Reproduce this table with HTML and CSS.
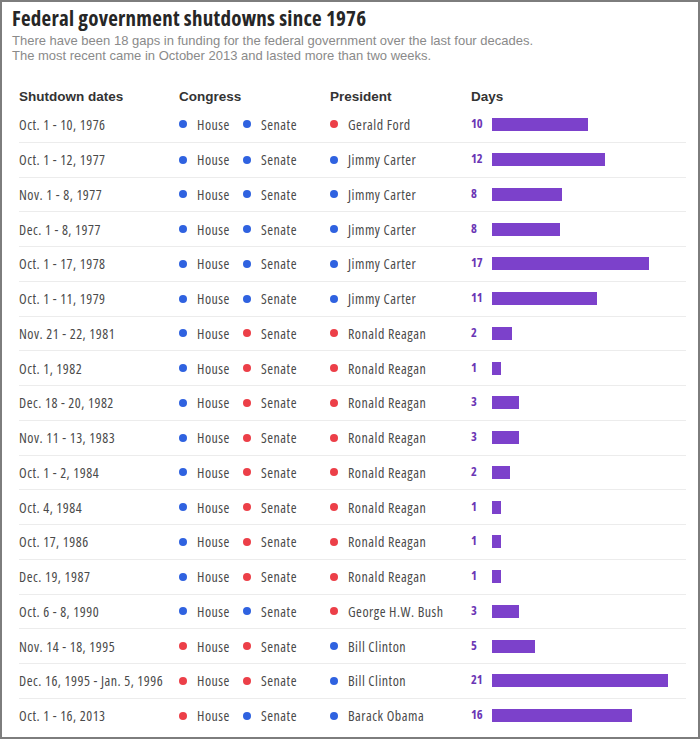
FILE: index.html
```html
<!DOCTYPE html>
<html>
<head>
<meta charset="utf-8">
<link rel="stylesheet" href="styles.css">
</head>
<body>
<div class="frame">
  <h1 class="title">Federal government shutdowns since 1976</h1>
  <p class="sub">There have been 18 gaps in funding for the federal government over the last four decades.<br>The most recent came in October 2013 and lasted more than two weeks.</p>
  <div class="table">
    <div class="head">
      <div>Shutdown dates</div><div>Congress</div><div>President</div><div>Days</div>
    </div>
    <div class="row"><div class="date">Oct. 1 - 10, 1976</div><div class="cong"><span class="it h"><i class="dot d"></i>House</span><span class="it"><i class="dot d"></i>Senate</span></div><div class="pres"><i class="dot r"></i>Gerald Ford</div><div class="days"><b>10</b><span class="bar" style="width:96px"></span></div></div>
    <div class="row"><div class="date">Oct. 1 - 12, 1977</div><div class="cong"><span class="it h"><i class="dot d"></i>House</span><span class="it"><i class="dot d"></i>Senate</span></div><div class="pres"><i class="dot d"></i>Jimmy Carter</div><div class="days"><b>12</b><span class="bar" style="width:113px"></span></div></div>
    <div class="row"><div class="date">Nov. 1 - 8, 1977</div><div class="cong"><span class="it h"><i class="dot d"></i>House</span><span class="it"><i class="dot d"></i>Senate</span></div><div class="pres"><i class="dot d"></i>Jimmy Carter</div><div class="days"><b>8</b><span class="bar" style="width:70px"></span></div></div>
    <div class="row"><div class="date">Dec. 1 - 8, 1977</div><div class="cong"><span class="it h"><i class="dot d"></i>House</span><span class="it"><i class="dot d"></i>Senate</span></div><div class="pres"><i class="dot d"></i>Jimmy Carter</div><div class="days"><b>8</b><span class="bar" style="width:68px"></span></div></div>
    <div class="row"><div class="date">Oct. 1 - 17, 1978</div><div class="cong"><span class="it h"><i class="dot d"></i>House</span><span class="it"><i class="dot d"></i>Senate</span></div><div class="pres"><i class="dot d"></i>Jimmy Carter</div><div class="days"><b>17</b><span class="bar" style="width:157px"></span></div></div>
    <div class="row"><div class="date">Oct. 1 - 11, 1979</div><div class="cong"><span class="it h"><i class="dot d"></i>House</span><span class="it"><i class="dot d"></i>Senate</span></div><div class="pres"><i class="dot d"></i>Jimmy Carter</div><div class="days"><b>11</b><span class="bar" style="width:105px"></span></div></div>
    <div class="row"><div class="date">Nov. 21 - 22, 1981</div><div class="cong"><span class="it h"><i class="dot d"></i>House</span><span class="it"><i class="dot r"></i>Senate</span></div><div class="pres"><i class="dot r"></i>Ronald Reagan</div><div class="days"><b>2</b><span class="bar" style="width:20px"></span></div></div>
    <div class="row"><div class="date">Oct. 1, 1982</div><div class="cong"><span class="it h"><i class="dot d"></i>House</span><span class="it"><i class="dot r"></i>Senate</span></div><div class="pres"><i class="dot r"></i>Ronald Reagan</div><div class="days"><b>1</b><span class="bar" style="width:9px"></span></div></div>
    <div class="row"><div class="date">Dec. 18 - 20, 1982</div><div class="cong"><span class="it h"><i class="dot d"></i>House</span><span class="it"><i class="dot r"></i>Senate</span></div><div class="pres"><i class="dot r"></i>Ronald Reagan</div><div class="days"><b>3</b><span class="bar" style="width:27px"></span></div></div>
    <div class="row"><div class="date">Nov. 11 - 13, 1983</div><div class="cong"><span class="it h"><i class="dot d"></i>House</span><span class="it"><i class="dot r"></i>Senate</span></div><div class="pres"><i class="dot r"></i>Ronald Reagan</div><div class="days"><b>3</b><span class="bar" style="width:27px"></span></div></div>
    <div class="row"><div class="date">Oct. 1 - 2, 1984</div><div class="cong"><span class="it h"><i class="dot d"></i>House</span><span class="it"><i class="dot r"></i>Senate</span></div><div class="pres"><i class="dot r"></i>Ronald Reagan</div><div class="days"><b>2</b><span class="bar" style="width:18px"></span></div></div>
    <div class="row"><div class="date">Oct. 4, 1984</div><div class="cong"><span class="it h"><i class="dot d"></i>House</span><span class="it"><i class="dot r"></i>Senate</span></div><div class="pres"><i class="dot r"></i>Ronald Reagan</div><div class="days"><b>1</b><span class="bar" style="width:9px"></span></div></div>
    <div class="row"><div class="date">Oct. 17, 1986</div><div class="cong"><span class="it h"><i class="dot d"></i>House</span><span class="it"><i class="dot r"></i>Senate</span></div><div class="pres"><i class="dot r"></i>Ronald Reagan</div><div class="days"><b>1</b><span class="bar" style="width:9px"></span></div></div>
    <div class="row"><div class="date">Dec. 19, 1987</div><div class="cong"><span class="it h"><i class="dot d"></i>House</span><span class="it"><i class="dot r"></i>Senate</span></div><div class="pres"><i class="dot r"></i>Ronald Reagan</div><div class="days"><b>1</b><span class="bar" style="width:9px"></span></div></div>
    <div class="row"><div class="date">Oct. 6 - 8, 1990</div><div class="cong"><span class="it h"><i class="dot d"></i>House</span><span class="it"><i class="dot d"></i>Senate</span></div><div class="pres"><i class="dot r"></i>George H.W. Bush</div><div class="days"><b>3</b><span class="bar" style="width:27px"></span></div></div>
    <div class="row"><div class="date">Nov. 14 - 18, 1995</div><div class="cong"><span class="it h"><i class="dot r"></i>House</span><span class="it"><i class="dot r"></i>Senate</span></div><div class="pres"><i class="dot d"></i>Bill Clinton</div><div class="days"><b>5</b><span class="bar" style="width:43px"></span></div></div>
    <div class="row"><div class="date">Dec. 16, 1995 - Jan. 5, 1996</div><div class="cong"><span class="it h"><i class="dot r"></i>House</span><span class="it"><i class="dot r"></i>Senate</span></div><div class="pres"><i class="dot d"></i>Bill Clinton</div><div class="days"><b>21</b><span class="bar" style="width:176px"></span></div></div>
    <div class="row"><div class="date">Oct. 1 - 16, 2013</div><div class="cong"><span class="it h"><i class="dot r"></i>House</span><span class="it"><i class="dot d"></i>Senate</span></div><div class="pres"><i class="dot d"></i>Barack Obama</div><div class="days"><b>16</b><span class="bar" style="width:140px"></span></div></div>
  </div>
</div>
</body>
</html>
```
FILE: styles.css
```css
html, body {
  margin: 0;
  padding: 0;
  background: #fff;
}
.frame {
  box-sizing: border-box;
  width: 700px;
  height: 739px;
  border: 2px solid #7d7d7d;
  background: #fff;
  padding: 4px 0 0 10px;
  overflow: hidden;
}
.title {
  margin: 0;
  font-family: "Open Sans", sans-serif;
  font-stretch: 75%;
  font-weight: 700;
  font-size: 21px;
  line-height: 24px;
  letter-spacing: 0.25px;
  color: #262626;
}
.sub {
  margin: 3px 0 0 0;
  font-family: "Liberation Sans", sans-serif;
  font-size: 13px;
  line-height: 15px;
  color: #8a8a8a;
}
.table {
  margin: 23px 0 0 7px;
  width: 667px;
}
.head, .row {
  display: grid;
  grid-template-columns: 160px 151px 141px 1fr;
  align-items: center;
}
.head {
  height: 20px;
  font-family: "Liberation Sans", sans-serif;
  font-weight: bold;
  font-size: 13.5px;
  color: #333;
  margin-bottom: 1px;
}
.row {
  box-sizing: border-box;
  height: 34.75px;
  font-family: "Open Sans", sans-serif;
  font-stretch: 75%;
  font-size: 14px;
  letter-spacing: 0.5px;
  color: #4a4a4a;
  white-space: nowrap;
}
.row + .row {
  border-top: 1px solid #ececec;
}
.cong {
  display: flex;
  align-items: center;
}
.it {
  display: flex;
  align-items: center;
}
.it.h {
  width: 64px;
}
.pres {
  display: flex;
  align-items: center;
}
.dot {
  display: inline-block;
  width: 8px;
  height: 8px;
  border-radius: 50%;
  margin-right: 10px;
  flex: none;
}
.dot.d { background: #2f62e0; }
.dot.r { background: #ec3f48; }
.days {
  display: flex;
  align-items: flex-start;
  height: 13px;
}
.days b {
  width: 21px;
  font-family: "Open Sans", sans-serif;
  font-stretch: 75%;
  font-weight: 700;
  font-size: 12.5px;
  line-height: 11px;
  letter-spacing: 0;
  color: #6b36b5;
}
.bar {
  display: block;
  height: 13px;
  background: #7c41cb;
}
```
